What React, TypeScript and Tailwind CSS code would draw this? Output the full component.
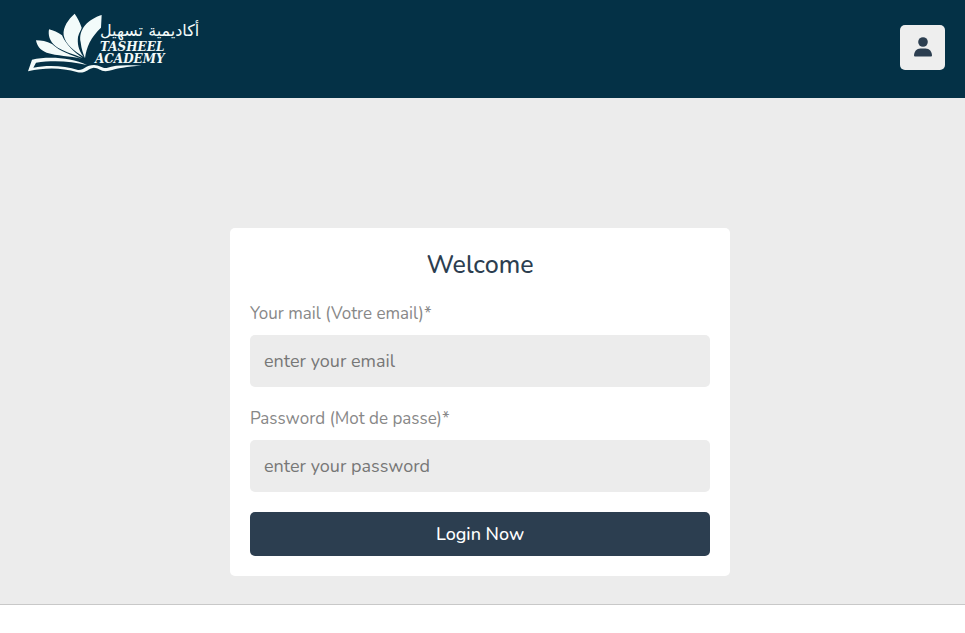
function Logo() {
  return (
    <svg viewBox="0 0 600 225" className="h-[75px] w-[200px]" role="img" aria-label="Tasheel Academy">
      <g fill="#f3fbfa">
        <path d="M245 30 C205 43 174 72 182 112 C184 133 190 147 195 160 C199 126 213 96 243 68 Z" />
        <path d="M164 26 C145 43 128 66 131 91 C136 119 162 137 191 156 C174 134 172 114 174 96 C177 82 184 74 185 68 C179 51 173 39 164 26 Z" />
        <path d="M87 73 C84 90 88 108 107 124 C127 139 158 147 188 159 C160 140 137 117 126 91 C114 82 100 76 87 73 Z" />
        <path d="M48 106 C51 122 59 135 80 143 C111 153 150 152 185 161 C155 151 119 139 96 117 C80 109 64 106 48 106 Z" />
        <path d="M36 164 C84 154 153 157 201 180 C153 168 99 165 48 173 L40 188 C83 180 134 182 174 195 C191 197 197 180 222 180 C239 180 246 191 260 189 C286 180 315 180 365 182 C320 184 293 190 267 197 C244 203 237 188 221 188 C205 190 197 206 173 202 C121 187 75 188 24 199 Z" />
        <text x="240" y="94" direction="ltr" fontFamily="'DejaVu Sans', sans-serif" fontSize="48">أكاديمية تسهيل</text>
        <text x="240" y="139" fontFamily="'DejaVu Serif', serif" fontSize="36" fontWeight="700" fontStyle="italic">TASHEEL</text>
        <text x="225" y="174" fontFamily="'DejaVu Serif', serif" fontSize="36" fontWeight="700" fontStyle="italic">ACADEMY</text>
      </g>
    </svg>
  );
}

type FieldProps = { id: string; label: string; type: string; placeholder: string };

function Field({ id, label, type, placeholder }: FieldProps) {
  return (
    <div className="mb-5">
      <label htmlFor={id} className="block pb-[10px] text-[17px] leading-[23px] text-[#888888]">
        {label}
      </label>
      <input
        id={id}
        name={id}
        type={type}
        placeholder={placeholder}
        required
        className="block h-[52px] w-full rounded-[5px] bg-[#ececec] px-3.5 text-[18px] text-[#2c3e50] placeholder:text-[#777777]"
      />
    </div>
  );
}

export default function App() {
  return (
    <div className="min-h-screen bg-white font-[Nunito,Lato,sans-serif]">
      <header className="flex h-[98px] items-start justify-between bg-[#043146] px-5">
        <a href="#home" className="mt-[5px] block">
          <Logo />
        </a>
        <button
          type="button"
          aria-label="Account"
          className="mt-[25px] flex size-[45px] items-center justify-center rounded-[5px] bg-[#eeeeee] pb-0.5 text-[#2c3e50]"
        >
          <svg viewBox="0 0 18 20" className="h-5 w-[18px]" fill="currentColor" aria-hidden="true">
            <circle cx="9" cy="5" r="4.800" />
            <path d="M6.500 11.400 H11.500 C15.500 11.400 18 14.600 18 18.600 Q18 19.600 17 19.600 H1 Q0 19.600 0 18.600 C0 14.600 2.500 11.400 6.500 11.400 Z" />
          </svg>
        </button>
      </header>
      <main className="flex justify-center border-b border-[#c8c8c8] bg-[#ececec] pt-[130px] pr-[5px] pb-7">
        <form className="w-full max-w-[500px] rounded-[5px] bg-white p-5" onSubmit={(e) => e.preventDefault()}>
          <h1 className="mb-5 text-center text-[25px] leading-[34px] font-medium text-[#2c3e50]">Welcome</h1>
          <Field id="email" label="Your mail (Votre email)*" type="email" placeholder="enter your email" />
          <Field id="password" label="Password (Mot de passe)*" type="password" placeholder="enter your password" />
          <button type="submit" className="block h-11 w-full rounded-[5px] bg-[#2c3e50] text-[18px] font-medium text-white">
            Login Now
          </button>
        </form>
      </main>
    </div>
  );
}
